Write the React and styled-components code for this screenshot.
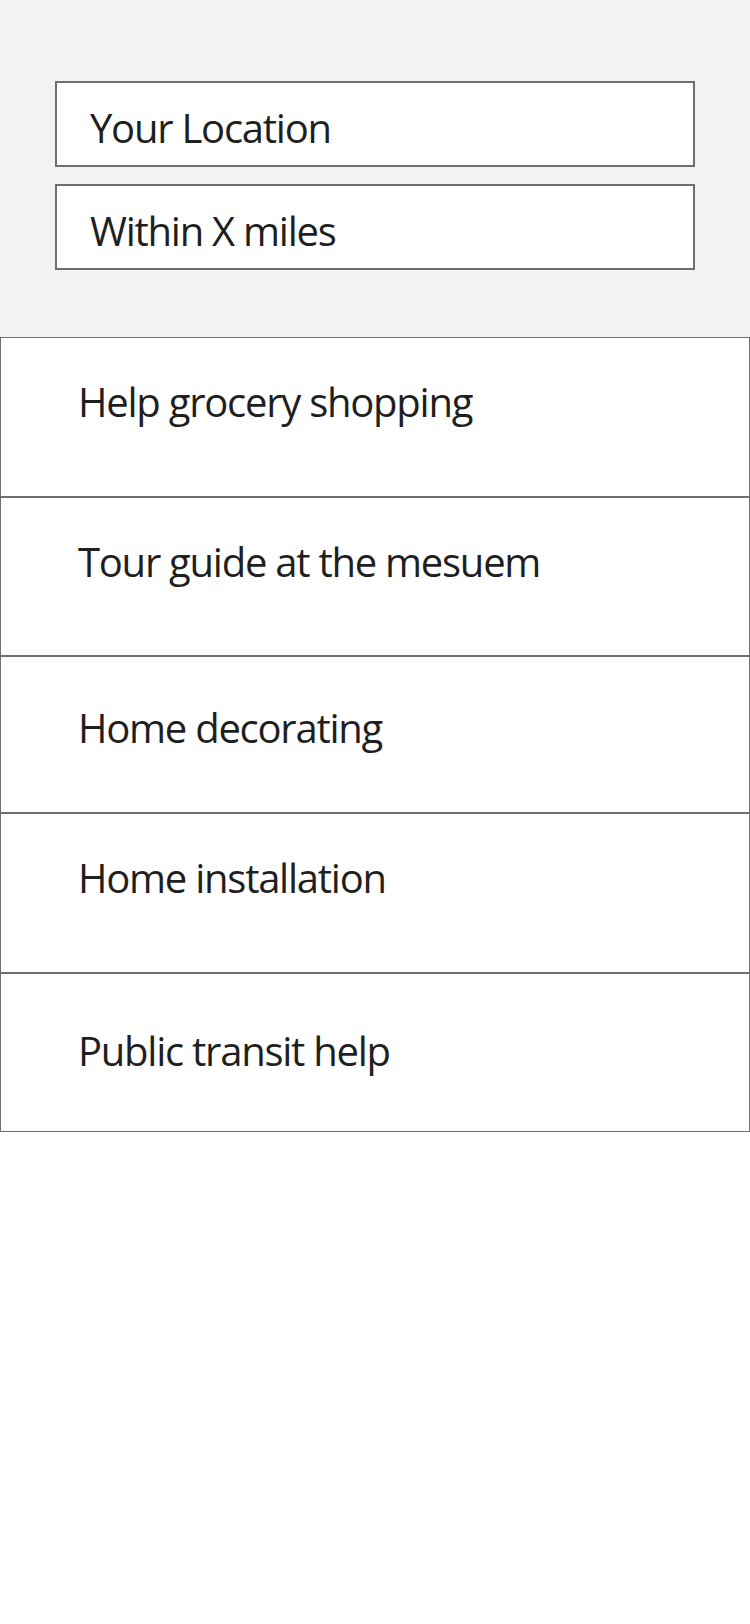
import React from 'react';
import styled, { createGlobalStyle } from 'styled-components';

const GlobalStyle = createGlobalStyle`
  * {
    box-sizing: border-box;
  }
  body {
    margin: 0;
    background: #ffffff;
    font-family: "Open Sans", "Noto Sans", sans-serif;
    color: #1f1f1f;
  }
`;

const Page = styled.div`
  width: 750px;
  min-height: 1624px;
  background: #ffffff;
`;

const SearchPanel = styled.div`
  display: flex;
  flex-direction: column;
  gap: 17px;
  background: #f2f2f2;
  padding: 81px 55px 67px;
`;

const Field = styled.div`
  height: 86px;
  background: #ffffff;
  border: 2px solid #6e6e6e;
  padding: 25px 0 0 33px;
  font-size: 40px;
  line-height: 1;
  letter-spacing: -1.25px;
`;

const TaskList = styled.ul`
  list-style: none;
  margin: 0;
  padding: 0;
`;

const TaskRow = styled.li`
  height: ${(p) => p.$height}px;
  border: 1px solid #6e6e6e;
  padding: ${(p) => p.$offset}px 0 0 77px;
  font-size: 40px;
  line-height: 1;
  letter-spacing: -1.25px;
`;

const tasks = [
  { label: 'Help grocery shopping', height: 160, offset: 44 },
  { label: 'Tour guide at the mesuem', height: 159, offset: 44 },
  { label: 'Home decorating', height: 157, offset: 51 },
  { label: 'Home installation', height: 160, offset: 44 },
  { label: 'Public transit help', height: 159, offset: 57 },
];

export default function App() {
  return (
    <Page>
      <GlobalStyle />
      <SearchPanel>
        <Field>Your Location</Field>
        <Field>Within X miles</Field>
      </SearchPanel>
      <TaskList>
        {tasks.map((t) => (
          <TaskRow key={t.label} $height={t.height} $offset={t.offset}>
            {t.label}
          </TaskRow>
        ))}
      </TaskList>
    </Page>
  );
}
